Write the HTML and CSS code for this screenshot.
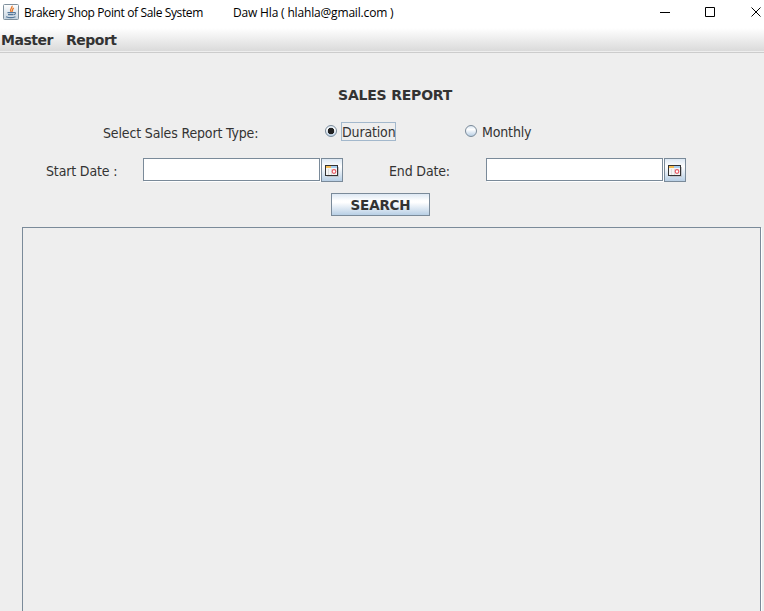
FILE: index.html
```html
<!DOCTYPE html>
<html lang="en">
<head>
<meta charset="utf-8">
<title>Brakery Shop Point of Sale System</title>
<link rel="stylesheet" href="styles.css">
</head>
<body>
<svg width="0" height="0" class="defs">
  <symbol id="calendar" viewBox="0 0 14 12">
    <path fill="#c2c5cb" d="M2 2h12v10H2z"/>
    <path fill="#333" d="M0 0h13v11H0z"/>
    <path fill="#f5f5f5" d="M1 1h11v9H1z"/>
    <path fill="#f5bd55" d="M1 1h5v2H1z"/>
    <path fill="#a5cdf0" d="M6 1h6v2H6z"/>
    <path fill="#dedede" d="M3 4h1v6H3zM6 4h1v6H6z"/>
    <circle cx="9" cy="6.5" r="1.8" fill="#fff" stroke="#e85b65" stroke-width="1.2"/>
  </symbol>
</svg>
<header class="titlebar">
  <svg class="java" width="16" height="16" viewBox="0 0 16 16">
    <defs><linearGradient id="tile" x2="0" y2="1"><stop stop-color="#fff"/><stop offset="1" stop-color="#c5d3df"/></linearGradient></defs>
    <rect x=".5" y=".5" width="15" height="15" rx="1" fill="url(#tile)" stroke="#7f909d"/>
    <path d="M9 1.8c1 2.2-3 2.8-1 6M10.8 4C8.6 5.4 10.3 6 8.8 7.8" fill="none" stroke="#e9792b" stroke-width="1.3"/>
    <path d="M4.5 8.6h6.2M5 10.6h5.5M3 12.7c2.5 1 7 1 9.5 0M10.7 8.5c2.4-.5 2.2 1.7.2 2.2" fill="none" stroke="#55789a" stroke-width="1.1"/>
  </svg>
  <span class="app">Brakery Shop Point of Sale System</span>
  <span class="user">Daw Hla ( hlahla@gmail.com )</span>
  <svg class="controls" width="101" height="24" viewBox="0 0 101 24">
    <path d="M0 12.5h10M45.5 7.5h9v9h-9zM91.5 7.5l9 9M100.5 7.5l-9 9" fill="none" stroke="#000"/>
  </svg>
</header>
<nav class="menu"><span class="master">Master</span><span class="report">Report</span></nav>
<main>
  <h1>SALES REPORT</h1>
  <div class="types">
    <span class="label type">Select Sales Report Type:</span>
    <span class="option duration"><i class="radio checked"></i><span class="label focus">Duration</span></span>
    <span class="option"><i class="radio"></i><span class="label month">Monthly</span></span>
  </div>
  <div class="dates">
    <span class="label start">Start Date :</span>
    <span class="field"></span>
    <span class="pick"><svg width="14" height="12"><use href="#calendar"/></svg></span>
    <span class="label end">End Date:</span>
    <span class="field"></span>
    <span class="pick"><svg width="14" height="12"><use href="#calendar"/></svg></span>
  </div>
  <div class="search"><span>SEARCH</span></div>
  <section class="results"></section>
</main>
</body>
</html>
```
FILE: styles.css
```css
* { box-sizing: border-box; }
body {
  margin: 0;
  height: 611px;
  overflow: hidden;
  display: flex;
  flex-direction: column;
  background: #eee;
  color: #333;
  font: 14px/18px "DejaVu Sans Condensed", "DejaVu Sans", sans-serif;
  font-stretch: condensed;
  white-space: nowrap;
}
.defs { display: none; }
.titlebar {
  flex: 0 0 28px;
  display: flex;
  background: #fff;
  color: #000;
  font: 12px/16px "Open Sans", sans-serif;
  padding: 5px 0 0 3px;
}
.java { margin: -1px 5px 0 0; }
.app { width: 209px; letter-spacing: -0.37px; }
.user { width: 427px; letter-spacing: -0.17px; }
.controls { margin-top: -5px; }
.menu {
  flex: 0 0 25px;
  display: flex;
  padding: 3px 0 0 1px;
  background: linear-gradient(#fff, #dadada 23px, #eee 23px, #eee 24px, #ccc 24px);
}
.menu, h1, .search {
  font-family: "DejaVu Sans", sans-serif;
  font-stretch: normal;
  font-weight: bold;
  font-size: 14px;
}
.menu { letter-spacing: -0.5px; }
.master { width: 65px; }
.label { letter-spacing: -0.15px; }
main { flex: 1; display: flex; flex-direction: column; }
h1 { margin: 33px 0 0 338px; line-height: 18px; letter-spacing: -0.2px; }
.types { display: flex; height: 24px; margin-top: 18px; }
.type { width: 222px; margin-left: 103px; padding-top: 2px; }
.option { display: flex; }
.duration { width: 140px; }
.radio {
  width: 12px;
  height: 12px;
  margin-top: 3px;
  border: 1px solid #7a8a99;
  border-radius: 50%;
  background: linear-gradient(#dbe7f2, #fff 35%, #b8cfe5);
}
.checked { background: radial-gradient(circle, #222 0 3px, transparent 3.6px), linear-gradient(#dbe7f2, #fff 35%, #b8cfe5); }
.focus { width: 55px; height: 19px; margin-left: 4px; border: 1px solid #a3b8cc; line-height: 18px; }
.month { margin-left: 5px; line-height: 20px; }
.dates { display: flex; margin-top: 12px; height: 24px; }
.start { width: 97px; margin-left: 46px; padding-top: 4px; }
.end { width: 97px; margin-left: 46px; padding-top: 4px; }
.field { width: 177px; height: 23px; border: 1px solid #7a8a99; background: #fff; box-shadow: 1px 1px #fff; }
.pick {
  display: flex;
  width: 22px;
  height: 24px;
  margin-left: 1px;
  padding: 6px 0 0 3px;
  border: 1px solid #7a8a99;
  background: linear-gradient(#dde8f3, #fff 35%, #b8cfe5);
}
.search {
  display: flex;
  justify-content: center;
  width: 99px;
  height: 23px;
  margin: 11px 0 0 331px;
  border: 1px solid #7a8a99;
  background: linear-gradient(#dde8f3, #fff 32%, #fff 40%, #b8cfe5);
  font-size: 13.5px;
  letter-spacing: -0.2px;
  line-height: 22px;
}
.results { flex: 1; width: 739px; margin: 11px 0 0 22px; border: 1px solid #7a8a99; border-bottom: 0; box-shadow: 1px 1px #fff; }
```
